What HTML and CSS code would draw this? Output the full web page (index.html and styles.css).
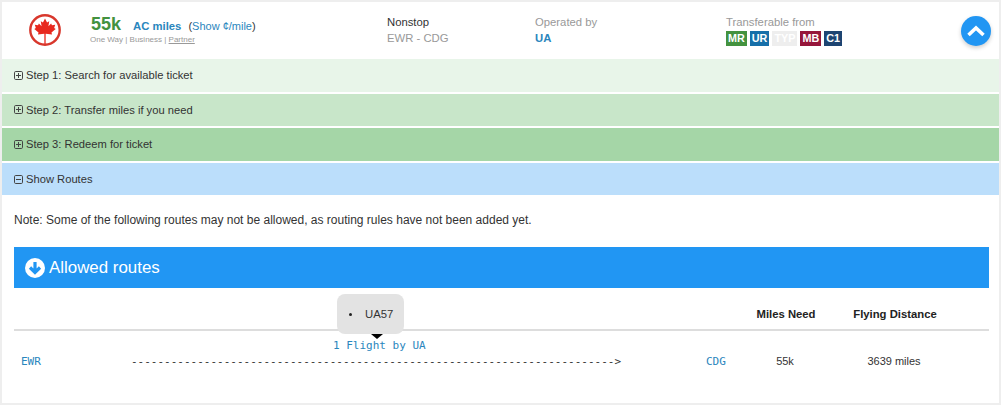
FILE: index.html
```html
<!DOCTYPE html>
<html lang="en">
<head>
    <meta charset="UTF-8">
    <title>Award flight</title>
    <link rel="stylesheet" href="styles.css">
</head>
<body>
    <div class="card">
        <div class="summary">
            <div class="logo">
                <svg width="34" height="34" viewBox="0 0 34 34">
                    <circle cx="17" cy="16" r="14.7" fill="none" stroke="#d8372c" stroke-width="2.4"/>
                    <path fill="#e8281e" transform="translate(2.55 1.2) scale(.85)" d="M17 4L19.4 8.5 22 7.1 21 13 24.2 9.8 25.2 11.8 29 11.1 27.8 15.1 29.6 16.1 24.6 20.4 25.3 22.6 18 21.7H16L8.7 22.6 9.4 20.4 4.4 16.1 6.2 15.1 5 11.1 8.8 11.8 9.8 9.8 13 13 12 7.1 14.6 8.5z"/>
                    <path stroke="#e8281e" stroke-width="1.3" d="M17 19v11"/>
                </svg>
            </div>
            <div class="miles">
                <div class="miles-top">
                    <span class="miles-num">55k</span>
                    <span class="miles-name">AC miles</span>
                    <span class="miles-show">(<span class="link">Show ¢/mile</span>)</span>
                </div>
                <div class="miles-sub">One Way | Business | <u>Partner</u></div>
            </div>
            <div class="stops">
                <div>Nonstop</div>
                <div class="muted">EWR - CDG</div>
            </div>
            <div class="operated">
                <div class="muted">Operated by</div>
                <div class="carrier">UA</div>
            </div>
            <div class="transfer">
                <div class="muted">Transferable from</div>
                <div class="badges">
                    <span class="badge mr">MR</span>
                    <span class="badge ur">UR</span>
                    <span class="badge typ">TYP</span>
                    <span class="badge mb">MB</span>
                    <span class="badge c1">C1</span>
                </div>
            </div>
            <div class="up-btn">
                <svg width="18" height="12" viewBox="0 0 18 12">
                    <path d="M1.5 10L9 3 16.5 10" fill="none" stroke="#fff" stroke-width="3.6"/>
                </svg>
            </div>
        </div>

        <div class="step step1">
            <svg class="sign" viewBox="0 0 9 9"><rect x=".5" y=".5" width="8" height="8" rx="1.2"/><path d="M2 4.5h5M4.5 2v5"/></svg>
            Step 1: Search for available ticket
        </div>
        <div class="step step2">
            <svg class="sign" viewBox="0 0 9 9"><rect x=".5" y=".5" width="8" height="8" rx="1.2"/><path d="M2 4.5h5M4.5 2v5"/></svg>
            Step 2: Transfer miles if you need
        </div>
        <div class="step step3">
            <svg class="sign" viewBox="0 0 9 9"><rect x=".5" y=".5" width="8" height="8" rx="1.2"/><path d="M2 4.5h5M4.5 2v5"/></svg>
            Step 3: Redeem for ticket
        </div>
        <div class="step step4">
            <svg class="sign" viewBox="0 0 9 9"><rect x=".5" y=".5" width="8" height="8" rx="1.2"/><path d="M2 4.5h5"/></svg>
            Show Routes
        </div>

        <div class="routes">
            <p class="note">Note: Some of the following routes may not be allowed, as routing rules have not been added yet.</p>
            <div class="allowed">
                <svg width="20" height="20" viewBox="0 0 20 20">
                    <circle cx="10" cy="10" r="10" fill="#fff"/>
                    <path d="M10 4v10M5 9.5L10 14.5l5-5" fill="none" stroke="#2196f3" stroke-width="3.2"/>
                </svg>
                <span>Allowed routes</span>
            </div>
            <div class="route-head">
                <div class="col-miles">Miles Need</div>
                <div class="col-dist">Flying Distance</div>
            </div>
            <div class="route-row">
                <div class="code">EWR</div>
                <div class="path">
                    <div class="flight-label">1 Flight by UA</div>
                    <div class="dashes">-------------------------------------------------------------------------&gt;</div>
                    <div class="tooltip">
                        <ul><li>UA57</li></ul>
                    </div>
                </div>
                <div class="code code-to">CDG</div>
                <div class="col-miles">55k</div>
                <div class="col-dist">3639 miles</div>
            </div>
        </div>
    </div>
</body>
</html>
```

FILE: styles.css
```css
body {
    margin: 0;
    font-family: "Liberation Sans", Arial, sans-serif;
    font-size: 11.3px;
    color: #333;
    background-color: #fff;
}
.card {
    width: 1001px;
    height: 405px;
    box-sizing: border-box;
    border: 2px solid #eee;
    overflow: hidden;
}
.summary {
    height: 57px;
    display: flex;
    align-items: center;
}
.logo {
    width: 88px;
    padding-left: 26px;
    box-sizing: border-box;
    display: flex;
}
.miles {
    width: 297px;
    padding-bottom: 3px;
}
.miles-top {
    display: flex;
    align-items: baseline;
}
.miles-num {
    font-size: 18px;
    font-weight: bold;
    color: #43923f;
    margin-left: 1px;
    margin-right: 12px;
}
.miles-name {
    font-weight: bold;
    color: #2a86bd;
    margin-right: 7px;
}
.miles-show {
    font-size: 11px;
}
.link {
    color: #2a86bd;
}
.miles-sub {
    font-size: 8px;
    color: #999;
}
.muted {
    color: #999;
}
.stops {
    width: 148px;
    line-height: 16px;
    padding-bottom: 1px;
}
.operated {
    width: 191px;
    line-height: 16px;
    padding-bottom: 2px;
}
.carrier {
    font-weight: bold;
    color: #2a86bd;
}
.transfer {
    width: 235px;
    line-height: 15px;
}
.badges {
    display: flex;
    gap: 3px;
    margin-top: 1px;
}
.badge {
    height: 15px;
    line-height: 15px;
    padding: 0 2px;
    font-size: 10.8px;
    font-weight: bold;
    color: #fff;
}
.mr { background-color: #43923f; }
.ur { background-color: #166fa9; }
.typ { background-color: #eee; }
.mb { background-color: #96163b; }
.c1 { background-color: #1d4471; }
.up-btn {
    width: 30px;
    height: 30px;
    flex: none;
    border-radius: 50%;
    background-color: #2196f3;
    box-shadow: 0 2px 4px rgba(0, 0, 0, 0.2);
    display: flex;
    align-items: center;
    justify-content: center;
}
.step {
    height: 32.6px;
    padding-left: 12px;
    margin-bottom: 2px;
    display: flex;
    align-items: center;
    font-size: 11.2px;
}
.step1 { background-color: #e8f5e9; }
.step2 { background-color: #c8e6c9; }
.step3 { background-color: #a5d6a7; }
.step4 { background-color: #bbdefb; margin-bottom: 0; }
.sign {
    width: 9px;
    height: 9px;
    margin-right: 3px;
    fill: none;
    stroke: #444;
    stroke-width: 1;
}
.routes {
    padding: 0 10px 0 12px;
}
.note {
    margin: 0;
    padding-top: 17px;
    font-size: 12px;
    line-height: 16px;
}
.allowed {
    margin-top: 19px;
    height: 41px;
    background-color: #2196f3;
    color: #fff;
    font-size: 16.9px;
    display: flex;
    align-items: center;
    gap: 4px;
    padding-left: 11px;
}
.route-head {
    height: 43px;
    padding-top: 11px;
    display: flex;
    justify-content: flex-end;
    align-items: center;
    font-weight: bold;
    color: #222;
    border-bottom: 2px solid #ddd;
    box-sizing: border-box;
}
.col-miles {
    width: 94px;
    text-align: center;
}
.col-dist {
    width: 124px;
    padding-right: 32px;
    text-align: center;
}
.route-row {
    display: flex;
    align-items: flex-end;
    height: 60px;
    padding-bottom: 23px;
    box-sizing: border-box;
    font-size: 11px;
    line-height: 13px;
}
.code {
    font-family: "DejaVu Sans Mono", monospace;
    color: #2a86bd;
    width: 110px;
    padding-left: 7px;
}
.code-to {
    width: 32px;
    padding-left: 0;
    margin-left: 84px;
}
.path {
    position: relative;
    width: 491px;
    font-family: "DejaVu Sans Mono", monospace;
}
.flight-label {
    color: #2a86bd;
    line-height: 16px;
    margin-bottom: 1px;
    padding-left: 202px;
}
.dashes {
    white-space: nowrap;
}
.tooltip {
    position: absolute;
    left: 206px;
    bottom: 34px;
    width: 67px;
    height: 40px;
    background-color: #e3e3e3;
    border-radius: 8px;
    font-family: "Liberation Sans", Arial, sans-serif;
    font-size: 11.3px;
}
.tooltip ul {
    list-style: none;
    margin: 0;
    padding: 0 0 0 12px;
    height: 100%;
}
.tooltip li {
    height: 100%;
    display: flex;
    align-items: center;
    gap: 13px;
}
.tooltip li::before {
    content: "";
    width: 3px;
    height: 3px;
    border-radius: 50%;
    background-color: #222;
}
.tooltip::after {
    content: "";
    position: absolute;
    left: 34px;
    top: 40px;
    border-left: 6px solid transparent;
    border-right: 6px solid transparent;
    border-top: 5px solid #000;
}
```
